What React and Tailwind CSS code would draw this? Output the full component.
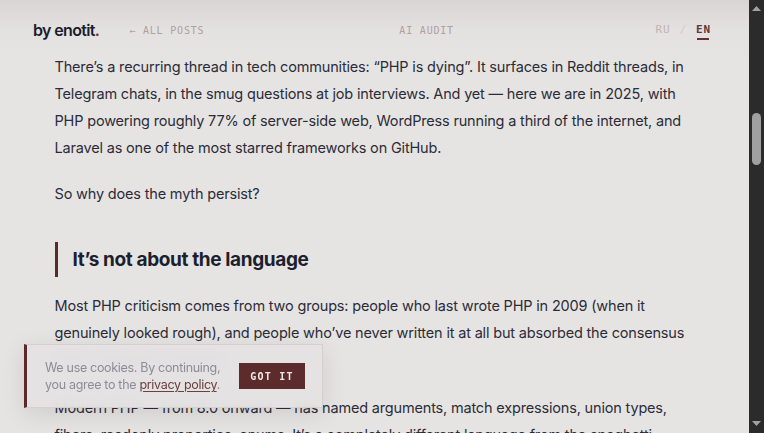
import React from 'react';

const mono = { fontFamily: '"DejaVu Sans Mono", "Liberation Mono", monospace' };

const Header = () => (
  <header className="relative flex h-[60px] shrink-0 items-center pl-[33px] pr-[38px] bg-gradient-to-b from-[#d8d5d4] via-[#e4e2e1] to-[#e6e4e3]">
    <a className="text-[16px] font-semibold tracking-[-0.04em] text-[#1b1d2b]">
      by enotit<span className="text-[#7a3030]">.</span>
    </a>
    <a className="ml-[30px] text-[10px] tracking-[0.08em] text-[#b09ea0]" style={mono}>
      ← ALL POSTS
    </a>
    <a className="ml-[195px] text-[10px] tracking-[0.08em] text-[#b09ea0]" style={mono}>
      AI AUDIT
    </a>
    <div className="ml-auto flex items-center gap-[9px] text-[11px] tracking-[0.08em]" style={mono}>
      <span className="text-[#c0b2b3]">RU</span>
      <span className="text-[#d3c9ca]">/</span>
      <span className="relative font-bold text-[#5e3838]">
        EN
        <span className="absolute left-[1px] right-[2px] top-[16px] h-[2px] bg-[#6b2e2e]"></span>
      </span>
    </div>
  </header>
);

const CookieBanner = () => (
  <div className="absolute left-[24px] top-[344px] flex h-[64px] w-[299px] items-center gap-[10px] border border-l-[3px] border-[#d3d0cf] border-l-[#5a2a2a] bg-[#e4e2e1]/95 pl-[18px] pr-[17px] shadow-[0_6px_24px_rgba(0,0,0,0.10)] backdrop-blur-sm">
    <p className="flex-1 whitespace-nowrap text-[12.5px] leading-[17px] tracking-[-0.025em] text-[#8b8c97]">
      We use cookies. By continuing,
      <br />
      you agree to the{' '}
      <a className="text-[#6a4040] underline underline-offset-2">privacy policy</a>.
    </p>
    <button className="h-[26px] w-[66px] shrink-0 bg-[#5c2b2b] text-[10px] font-bold tracking-[0.12em] text-[#f2e8e8]" style={mono}>
      GOT IT
    </button>
  </div>
);

const Scrollbar = () => (
  <div className="flex w-[15px] shrink-0 flex-col items-center bg-[#2b2b2b]">
    <svg width="9" height="6" viewBox="0 0 9 6" className="mt-[6px]">
      <path d="M4.5 0 L9 5 L0 5 Z" fill="#a3a3a3" />
    </svg>
    <div className="mt-[101px] h-[52px] w-[9px] rounded-full bg-[#a0a0a0]"></div>
    <svg width="9" height="6" viewBox="0 0 9 6" className="mt-auto mb-[6px]">
      <path d="M0 0 L9 0 L4.5 5 Z" fill="#a3a3a3" />
    </svg>
  </div>
);

export default function App() {
  return (
    <div
      className="flex h-[433px] w-[764px] overflow-hidden bg-[#e6e4e3]"
      style={{ fontFamily: 'Inter, "Noto Sans", sans-serif' }}
    >
      <div className="relative flex flex-1 flex-col overflow-hidden">
        <Header />
        <article className="mx-auto w-[640px] text-[14.5px] leading-[27px] tracking-[-0.012em] text-[#2b2c38]">
          <p className="-mt-[7px]">
            There’s a recurring thread in tech communities: “PHP is dying”. It surfaces in Reddit threads, in
            Telegram chats, in the smug questions at job interviews. And yet — here we are in 2025, with
            PHP powering roughly 77% of server-side web, WordPress running a third of the internet, and
            Laravel as one of the most starred frameworks on GitHub.
          </p>
          <p className="mt-[19px]">So why does the myth persist?</p>
          <h2 className="mt-[35px] border-l-[3px] border-[#5a2a2a] py-[4px] pl-[15px] text-[19px] font-bold leading-[27px] tracking-[-0.02em] text-[#1c1f2e]">
            It’s not about the language
          </h2>
          <p className="mt-[15px]">
            Most PHP criticism comes from two groups: people who last wrote PHP in 2009 (when it
            genuinely looked rough), and people who’ve never written it at all but absorbed the consensus
            from a decade of memes.
          </p>
          <p className="mt-[21px]">
            Modern PHP — from 8.0 onward — has named arguments, match expressions, union types,
            fibers, readonly properties, enums. It’s a completely different language from the spaghetti
            monoliths people still remember.
          </p>
        </article>
        <CookieBanner />
      </div>
      <Scrollbar />
    </div>
  );
}
